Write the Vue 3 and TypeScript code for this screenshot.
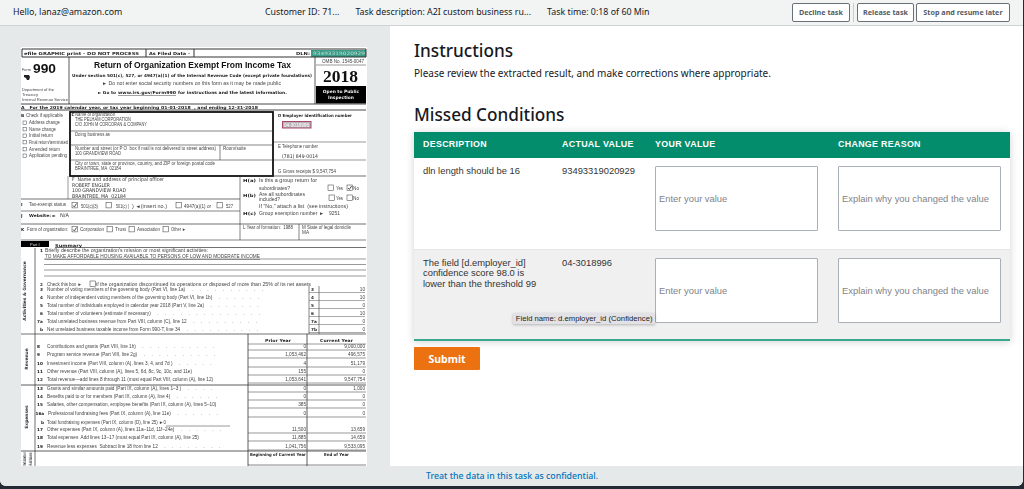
<script setup lang="ts">
type T = [number, number, string, string, number?]
type L = [number, number, number, number, number?]

const rows = [
  { desc: 'dln length should be 16', actual: '93493319020929', tip: '' },
  {
    desc: 'The field [d.employer_id] confidence score 98.0 is lower than the threshold 99',
    actual: '04-3018996',
    tip: 'Field name: d.employer_id (Confidence)',
  },
]

const topRows: [number, string, string, string, string, number][] = [
  [291, '3', 'Number of voting members of the governing body (Part VI, line 1a)', '3', '10', 10],
  [299, '4', 'Number of independent voting members of the governing body (Part VI, line 1b)', '4', '10', 6],
  [307, '5', 'Total number of individuals employed in calendar year 2018 (Part V, line 2a)', '5', '0', 7],
  [315, '6', 'Total number of volunteers (estimate if necessary)', '6', '10', 14],
  [323, '7a', 'Total unrelated business revenue from Part VIII, column (C), line 12', '7a', '0', 9],
  [331, 'b', 'Net unrelated business taxable income from Form 990-T, line 34', '7b', '0', 10],
]

const money: [number, string, string, string, string, number][] = [
  [348, '8', 'Contributions and grants (Part VIII, line 1h)', '0', '9,000,000', 10],
  [356, '9', 'Program service revenue (Part VIII, line 2g)', '1,053,462', '496,575', 10],
  [365, '10', 'Investment income (Part VIII, column (A), lines 3, 4, and 7d )', '4', '51,179', 5],
  [373, '11', 'Other revenue (Part VIII, column (A), lines 5, 6d, 8c, 9c, 10c, and 11e)', '155', '0', 0],
  [381, '12', 'Total revenue—add lines 8 through 11 (must equal Part VIII, column (A), line 12)', '1,053,641', '9,547,754', 0],
  [390, '13', 'Grants and similar amounts paid (Part IX, column (A), lines 1–3 )', '0', '1,000', 4],
  [398, '14', 'Benefits paid to or for members (Part IX, column (A), line 4)', '0', '0', 6],
  [406, '15', 'Salaries, other compensation, employee benefits (Part IX, column (A), lines 5–10)', '385', '0', 0],
  [415, '16a', 'Professional fundraising fees (Part IX, column (A), line 11e)', '0', '0', 6],
  [431, '17', 'Other expenses (Part IX, column (A), lines 11a–11d, 11f–24e)', '11,500', '13,659', 6],
  [439, '18', 'Total expenses  Add lines 13–17 (must equal Part IX, column (A), line 25)', '11,885', '14,659', 0],
  [448, '19', 'Revenue less expenses  Subtract line 18 from line 12', '1,041,756', '9,533,095', 8],
]

const dots = (n: number) => (n ? '     ' + Array(n).fill('.').join('     ') : '')

const texts: T[] = [
  [24, 54.5, 'efile GRAPHIC print - DO NOT PROCESS', 'db', 115],
  [149, 54.5, 'As Filed Data -', 'db', 41],
  [296, 54.5, 'DLN:', 'db', 14],
  [313, 54.5, '93493319020929', 'dln', 52],
  [22, 71, 'Form', 'sm'],
  [33, 72.5, '990', 'n990', 23],
  [94, 68, 'Return of Organization Exempt From Income Tax', 'title', 197],
  [72, 77, 'Under section 501(c), 527, or 4947(a)(1) of the Internal Revenue Code (except private foundations)', 'db', 240],
  [102, 85, '► Do not enter social security numbers on this form as it may be made public', 'f', 179],
  [98, 94, '► Go to', 'db', 18],
  [118, 94, 'www.irs.gov/Form990', 'db u', 58],
  [178, 94, 'for instructions and the latest information.', 'db', 109],
  [322, 63, 'OMB No. 1545-0047', 'f', 42],
  [323, 81.5, '2018', 'yr', 35],
  [22, 90.5, 'Department of the', 'sm', 32],
  [22, 95.5, 'Treasury', 'sm', 16],
  [22, 100.5, 'Internal Revenue Service', 'sm', 46],
  [21, 109, 'A   For the 2019 calendar year, or tax year beginning 01-01-2018  , and ending 12-31-2018', 'db', 237],
  [21, 116.5, 'B', 'db'],
  [26, 116.5, 'Check if applicable', 'f', 37],
  [29, 124, 'Address change', 'f', 31],
  [29, 130.5, 'Name change', 'f', 27],
  [29, 137, 'Initial return', 'f', 24],
  [29, 143.5, 'Final return/terminated', 'f', 39],
  [29, 150.5, 'Amended return', 'f', 31],
  [29, 157, 'Application pending', 'f', 38],
  [71.5, 115.5, 'C', 'db'],
  [75, 115.5, 'Name of organization', 'f', 40],
  [75, 120.5, 'THE PELHAM CORPORATION', 'f', 56],
  [75, 125.5, 'C/O JOHN M CORCORAN & COMPANY', 'f', 72],
  [75, 135.5, 'Doing business as', 'f', 35],
  [75, 149.5, 'Number and street (or P O  box if mail is not delivered to street address)', 'f', 141],
  [223, 149.5, 'Room/suite', 'f', 23],
  [75, 154.5, '100 GRANDVIEW ROAD', 'f', 46],
  [75, 164.5, 'City or town, state or province, country, and ZIP or foreign postal code', 'f', 140],
  [75, 169.5, 'BRAINTREE, MA  02184', 'f', 46],
  [278, 116.5, 'D Employer identification number', 'db', 74],
  [284, 126.5, '04-3018996', 'pink', 25],
  [278, 147.5, 'E Telephone number', 'f', 40],
  [282, 157.5, '(781) 849-0014', 'b5', 36],
  [278, 172.5, 'G Gross receipts $ 9,547,754', 'f', 58],
  [72, 181, 'F  Name and address of principal officer', 'b5', 92],
  [72, 186.5, 'ROBERT ENGLER', 'b5', 38],
  [72, 192, '100 GRANDVIEW ROAD', 'b5', 54],
  [72, 197.5, 'BRAINTREE, MA  02184', 'b5', 54],
  [21, 206, 'I', 'db'],
  [29, 206, 'Tax-exempt status', 'f', 37],
  [81, 208, '501(c)(3)', 'f', 17],
  [116, 208, '501(c) (', 'f', 13],
  [132, 208, ') ◄(insert no.)', 'f', 35],
  [184, 208, '4947(a)(1) or', 'f', 27],
  [226, 208, '527', 'f', 7],
  [21, 216.5, 'J', 'db'],
  [29, 216.5, 'Website: ►', 'db', 27],
  [60, 216.5, 'N/A', 'b5', 9],
  [21, 231, 'K', 'db'],
  [27, 231, 'Form of organization:', 'f', 41],
  [80, 231, 'Corporation', 'f', 24],
  [115, 231, 'Trust', 'f', 11],
  [137, 231, 'Association', 'f', 23],
  [171, 231, 'Other ►', 'f', 15],
  [243, 182, 'H(a)', 'db', 13],
  [259, 182, 'Is this a group return for', 'f', 58],
  [259, 190, 'subordinates?', 'f', 31],
  [243, 196.5, 'H(b)', 'db', 13],
  [259, 196, 'Are all subordinates', 'f', 46],
  [259, 201, 'included?', 'f', 21],
  [259, 208, 'If "No," attach a list  (see instructions)', 'f', 89],
  [243, 214.5, 'H(c)', 'db', 13],
  [259, 214.5, 'Group exemption number ►', 'f', 65],
  [329, 214.5, '9251', 'f', 11],
  [336, 190, 'Yes', 'f', 7],
  [353, 190, 'No', 'f', 6],
  [336, 200, 'Yes', 'f', 7],
  [353, 200, 'No', 'f', 6],
  [243, 229, 'L Year of formation:  1988', 'f', 50],
  [302, 229, 'M State of legal domicile', 'f', 49],
  [302, 234, 'MA', 'f'],
  [30, 246, 'Part I', 'wh'],
  [55, 246.5, 'Summary', 'db', 27],
  [40, 252, '1', 'db'],
  [45, 252, 'Briefly describe the organization\'s mission or most significant activities:', 'f', 163],
  [45, 258, 'TO MAKE AFFORDABLE HOUSING AVAILABLE TO PERSONS OF LOW AND MODERATE INCOME', 'f u', 215],
  [40, 285.5, '2', 'db'],
  [47, 285.5, 'Check this box ►', 'f', 35],
  [96, 285.5, 'if the organization discontinued its operations or disposed of more than 25% of its net assets', 'f', 215],
  [265, 341.5, 'Prior Year', 'db', 26],
  [320, 341.5, 'Current Year', 'db', 33],
  [41, 423.5, 'b', 'db'],
  [47, 423.5, 'Total fundraising expenses (Part IX, column (D), line 25) ►0', 'f', 119],
  [250, 456, 'Beginning of Current Year', 'db', 56],
  [324, 456, 'End of Year', 'db', 25],
]

const lines: L[] = [
  [22, 49, 366, 49, 1], [22, 57, 366, 57, 1], [22, 49, 22, 57, 1], [366, 49, 366, 57, 1],
  [146, 49, 146, 57, 1], [194, 49, 194, 57, 1],
  [69, 57, 69, 104, 0.8], [315, 57, 315, 104, 0.8], [316, 65, 366, 65, 0.5],
  [21, 104, 366, 104, 0.9], [21, 110, 366, 110, 0.9],
  [68, 176, 68, 199, 0.5],
  [70, 131, 273, 131, 0.6], [70, 145, 273, 145, 0.6], [70, 160, 273, 160, 0.6], [220, 145, 220, 160, 0.6],
  [274, 142, 366, 142, 0.5], [274, 160, 366, 160, 0.5], [240, 176, 366, 176, 0.7],
  [21, 199, 240, 199, 0.7], [21, 211, 240, 211, 0.6], [21, 224, 366, 224, 0.7], [240, 176, 240, 240, 0.6],
  [299, 224, 299, 240, 0.6], [21, 240, 366, 240, 0.6],
  [55, 247.5, 366, 247.5, 0.7], [44, 259, 366, 259, 0.5], [44, 264.5, 366, 264.5, 0.5], [44, 270, 366, 270, 0.5], [44, 276, 366, 276, 0.5],
  [35, 248, 35, 466, 0.7], [309, 286, 309, 334, 0.6], [319, 286, 319, 334, 0.6],
  [21, 334, 366, 334, 0.7], [248, 334, 248, 466, 0.8], [307, 334, 307, 466, 0.8],
  [248, 344, 366, 344, 0.5], [21, 385, 366, 385, 0.8], [21, 451, 366, 451, 0.8],
  [248, 465, 366, 465, 0.6], [166, 426, 230, 426, 0.5],
]

const boxes: [number, number, boolean][] = [
  [23, 121, false], [23, 127.5, false], [23, 134, false], [23, 140.5, false], [23, 147.5, false], [23, 154, false],
]
const bigBoxes: [number, number, boolean][] = [
  [72, 202.5, true], [106, 202.5, false], [176, 202.5, false], [217, 202.5, false],
  [72, 226.5, true], [107, 226.5, false], [129, 226.5, false], [163, 226.5, false],
  [328, 185, false], [347, 185, true], [329, 195, false], [347, 195, false],
  [90, 281, false],
]
</script>

<template>
  <div class="screen">
    <div class="window">
      <header class="topbar">
        <span class="hello">Hello, lanaz@amazon.com</span>
        <div class="meta">
          <span>Customer ID: 71...</span>
          <span>Task description: A2I custom business ru...</span>
          <span>Task time: 0:18 of 60 Min</span>
        </div>
        <div class="actions">
          <button class="btn b-decline">Decline task</button>
          <i class="divider"></i>
          <button class="btn b-release">Release task</button>
          <button class="btn b-stop">Stop and resume later</button>
        </div>
      </header>

      <main class="body">
        <section class="doc-pane">
          <svg class="doc" viewBox="21 47 346 419" width="346" height="419" role="img" aria-label="Form 990">
            <rect x="21" y="47" width="346" height="419" fill="#fff" />
            <rect x="311" y="50" width="55" height="7" fill="#3a9c86" />
            <rect x="316" y="86" width="50" height="17.5" fill="#000" />
            <text x="341" y="93" class="wh-b">Open to Public</text>
            <text x="341" y="99" class="wh-b">Inspection</text>
            <path d="M24 75h5l1 2-1 3h-2l-1-2-2-1z" fill="#222" />
            <rect x="70" y="112" width="203" height="64" fill="none" stroke="#111" stroke-width="1.8" />
            <rect x="282.5" y="121.5" width="28.5" height="6.5" fill="#b9b3b8" stroke="#a8486b" stroke-width="1" />
            <rect x="21" y="241" width="28" height="6" fill="#000" />
            <line v-for="(l, i) in lines" :key="'l' + i" :x1="l[0]" :y1="l[1]" :x2="l[2]" :y2="l[3]" stroke="#333" :stroke-width="l[4]" />
            <g v-for="(b, i) in boxes" :key="'b' + i">
              <rect :x="b[0]" :y="b[1]" width="3.4" height="3.4" fill="#fff" stroke="#444" stroke-width="0.5" />
            </g>
            <g v-for="(b, i) in bigBoxes" :key="'c' + i">
              <rect :x="b[0]" :y="b[1]" width="5.4" height="5.4" fill="#fff" stroke="#333" stroke-width="0.5" />
              <path v-if="b[2]" :transform="`translate(${b[0]} ${b[1]})`" d="M1 3l1.4 1.4L4.6 1" fill="none" stroke="#222" stroke-width="0.8" />
            </g>
            <text v-for="(t, i) in texts" :key="'t' + i" :x="t[0]" :y="t[1]" :class="t[3]" :textLength="t[4]" :lengthAdjust="t[4] ? 'spacingAndGlyphs' : undefined">{{ t[2] }}</text>

            <g v-for="r in topRows" :key="'r' + r[0]">
              <text :x="r[1].length > 1 ? 37 : 40" :y="r[0]" class="db">{{ r[1] }}</text>
              <text x="47" :y="r[0]" class="f">{{ r[2] }}{{ dots(r[5]) }}</text>
              <text x="311" :y="r[0]" class="db">{{ r[3] }}</text>
              <text x="365" :y="r[0]" class="f end">{{ r[4] }}</text>
              <line x1="309" :y1="r[0] + 1.5" x2="365" :y2="r[0] + 1.5" stroke="#555" stroke-width="0.5" />
            </g>

            <g v-for="r in money" :key="'m' + r[0]">
              <text :x="r[1].length > 2 ? 35.5 : 37" :y="r[0]" class="db">{{ r[1] }}</text>
              <text :x="r[1].length > 2 ? 48 : 47" :y="r[0]" class="f">{{ r[2] }}{{ dots(r[5]) }}</text>
              <text x="306" :y="r[0]" class="f end">{{ r[3] }}</text>
              <text x="365" :y="r[0]" class="f end">{{ r[4] }}</text>
              <line x1="248" :y1="r[0] + 2" x2="366" :y2="r[0] + 2" stroke="#555" stroke-width="0.6" />
            </g>

            <text transform="translate(26 291) rotate(-90)" class="rot">Activities &amp; Governance</text>
            <text transform="translate(28 359) rotate(-90)" class="rot">Revenue</text>
            <text transform="translate(28 417) rotate(-90)" class="rot">Expenses</text>
            <text transform="translate(26 459) rotate(-90)" class="rot" textLength="13" lengthAdjust="spacingAndGlyphs">Net Assets or</text>
            <text transform="translate(32 459) rotate(-90)" class="rot" textLength="13" lengthAdjust="spacingAndGlyphs">Fund Balances</text>
          </svg>
        </section>

        <section class="content">
          <h2 class="heading">Instructions</h2>
          <p class="lead">Please review the extracted result, and make corrections where appropriate.</p>
          <h2 class="heading missed">Missed Conditions</h2>

          <table class="grid">
            <thead>
              <tr>
                <th class="c-desc">DESCRIPTION</th>
                <th class="c-act">ACTUAL VALUE</th>
                <th class="c-val">YOUR VALUE</th>
                <th class="c-why">CHANGE REASON</th>
              </tr>
            </thead>
            <tbody>
              <tr v-for="r in rows" :key="r.actual">
                <td>{{ r.desc }}</td>
                <td>{{ r.actual }}</td>
                <td class="field-cell">
                  <span v-if="r.tip" class="tip">{{ r.tip }}</span>
                  <input class="field" placeholder="Enter your value" />
                </td>
                <td class="field-cell">
                  <input class="field" placeholder="Explain why you changed the value" />
                </td>
              </tr>
            </tbody>
          </table>

          <button class="submit">Submit</button>
        </section>
      </main>

      <footer class="foot">Treat the data in this task as confidential.</footer>
    </div>
  </div>
</template>

<style>
html,
body {
  margin: 0;
  background: #232a33;
}
</style>

<style scoped>
.screen {
  width: 1024px;
  height: 489px;
  background: #232a33;
  overflow: hidden;
  font-family: "Noto Sans", sans-serif;
}
.window {
  width: 1023px;
  height: 486px;
  display: flex;
  flex-direction: column;
  background: #fff;
  border-radius: 0 0 6px 6px;
  overflow: hidden;
}
.topbar {
  height: 26px;
  flex: none;
  box-sizing: border-box;
  display: flex;
  align-items: center;
  padding: 0 13px 1px;
  background: #f2f3f3;
  border-bottom: 1px solid #d0d3d3;
  font-size: 8.85px;
  color: #16191f;
}
.hello {
  width: 252px;
}
.meta {
  display: flex;
  gap: 16px;
}
.actions {
  margin-left: auto;
  display: flex;
  align-items: center;
  gap: 2px;
}
.btn {
  height: 19px;
  padding: 0;
  box-sizing: border-box;
  background: #fff;
  border: 1px solid #687078;
  border-radius: 2px;
  font: 700 7.2px "Noto Sans", sans-serif;
  color: #545b64;
  white-space: nowrap;
}
.b-decline {
  width: 58px;
}
.b-release {
  width: 57px;
}
.b-stop {
  width: 94px;
}
.divider {
  width: 1px;
  height: 19px;
  background: #c9cccc;
  margin: 0 1px 0 1px;
}
.body {
  flex: 1;
  min-height: 0;
  display: flex;
}
.doc-pane {
  width: 390px;
  flex: none;
  box-sizing: border-box;
  padding: 21px 23px 0 21px;
  background: #e6e9e9;
  overflow: hidden;
}
.doc {
  display: block;
  filter: blur(0.35px);
}
.doc text {
  font-family: "Liberation Sans", sans-serif;
  fill: #333;
  white-space: pre;
}
.doc .f {
  font-size: 4.7px;
  fill: #444;
}
.doc .end {
  text-anchor: end;
}
.doc .sm {
  font-size: 3.8px;
  fill: #444;
}
.doc .b5 {
  font-size: 5.2px;
  font-family: "DejaVu Sans", sans-serif;
  fill: #333;
}
.doc .db {
  font-family: "DejaVu Sans", sans-serif;
  font-weight: 700;
  font-size: 4.2px;
  fill: #222;
}
.doc .u {
  text-decoration: underline;
}
.doc .dln {
  font-family: "DejaVu Sans", sans-serif;
  font-size: 4.6px;
  fill: #c8dcd6;
}
.doc .n990 {
  font-size: 13.5px;
  font-weight: 700;
  fill: #111;
}
.doc .title {
  font-size: 9.6px;
  font-weight: 700;
  fill: #111;
}
.doc .yr {
  font-family: "Liberation Serif", serif;
  font-size: 17px;
  font-weight: 700;
  fill: #111;
}
.doc .pink {
  font-size: 4.6px;
  fill: #fff;
}
.doc .wh {
  font-size: 4px;
  fill: #ddd;
}
.doc .wh-b {
  font-family: "DejaVu Sans", sans-serif;
  font-size: 4.4px;
  font-weight: 700;
  fill: #eee;
  text-anchor: middle;
}
.doc .rot {
  font-family: "DejaVu Sans", sans-serif;
  font-size: 4.4px;
  font-weight: 700;
  fill: #333;
  text-anchor: middle;
}
.content {
  flex: 1;
  min-width: 0;
  box-sizing: border-box;
  padding: 13px 13px 0 24px;
}
.heading {
  margin: 0;
  font-size: 17.2px;
  line-height: 24px;
  font-weight: 500;
  color: #16191f;
}
.lead {
  margin: 3px 0 0;
  font-size: 10px;
  line-height: 15px;
  color: #16191f;
}
.missed {
  margin-top: 22px;
}
.grid {
  width: 596px;
  margin-top: 5px;
  border-collapse: collapse;
  table-layout: fixed;
  box-shadow: 0 1px 8px rgba(0, 0, 0, 0.18);
  border-bottom: 2px solid #3aa88f;
  font-family: "Liberation Sans", sans-serif;
}
th {
  height: 26px;
  box-sizing: border-box;
  padding: 0 0 2px 9px;
  text-align: left;
  background: #048d6d;
  color: #fff;
  font-size: 8.9px;
  letter-spacing: 0.3px;
}
.c-desc {
  width: 139px;
}
.c-act {
  width: 102px;
}
.c-val {
  width: 183px;
  padding-left: 0;
}
.c-why {
  padding-left: 0;
}
td {
  height: 91px;
  box-sizing: border-box;
  padding: 8px 9px 0;
  vertical-align: top;
  font-size: 9.4px;
  line-height: 10.5px;
  color: #333;
}
td:first-child {
  padding-right: 12px;
}
tbody tr:nth-child(2) td {
  background: #f0f0f1;
  border-top: 1px solid #e4e5e5;
}
.field-cell {
  position: relative;
  padding-left: 0;
  padding-right: 0;
}
.field {
  display: block;
  width: 163px;
  height: 65px;
  box-sizing: border-box;
  padding: 0 3px;
  background: #fff;
  border: 1px solid #aab0b8;
  border-radius: 1px;
  font: 9.4px "Liberation Sans", sans-serif;
  color: #222;
  outline: none;
}
.field::placeholder {
  color: #7f8388;
  opacity: 1;
}
.tip {
  position: absolute;
  right: 100%;
  top: 63px;
  padding: 0 2.5px;
  height: 11.5px;
  line-height: 11.5px;
  white-space: nowrap;
  background: #e2e2e6;
  border-radius: 1px;
  box-shadow: 0 1px 3px rgba(0, 0, 0, 0.25);
  font-size: 7.7px;
  color: #222;
}
.submit {
  display: block;
  width: 66px;
  height: 23px;
  margin-top: 6px;
  border: none;
  border-radius: 1px;
  background: #ec7211;
  color: #fff;
  font: 700 10.5px "Noto Sans", sans-serif;
}
.foot {
  height: 20px;
  flex: none;
  box-sizing: border-box;
  padding-left: 426px;
  background: #e6e9e9;
  color: #0073bb;
  font-size: 8.75px;
  font-weight: 500;
  line-height: 20px;
}
</style>
